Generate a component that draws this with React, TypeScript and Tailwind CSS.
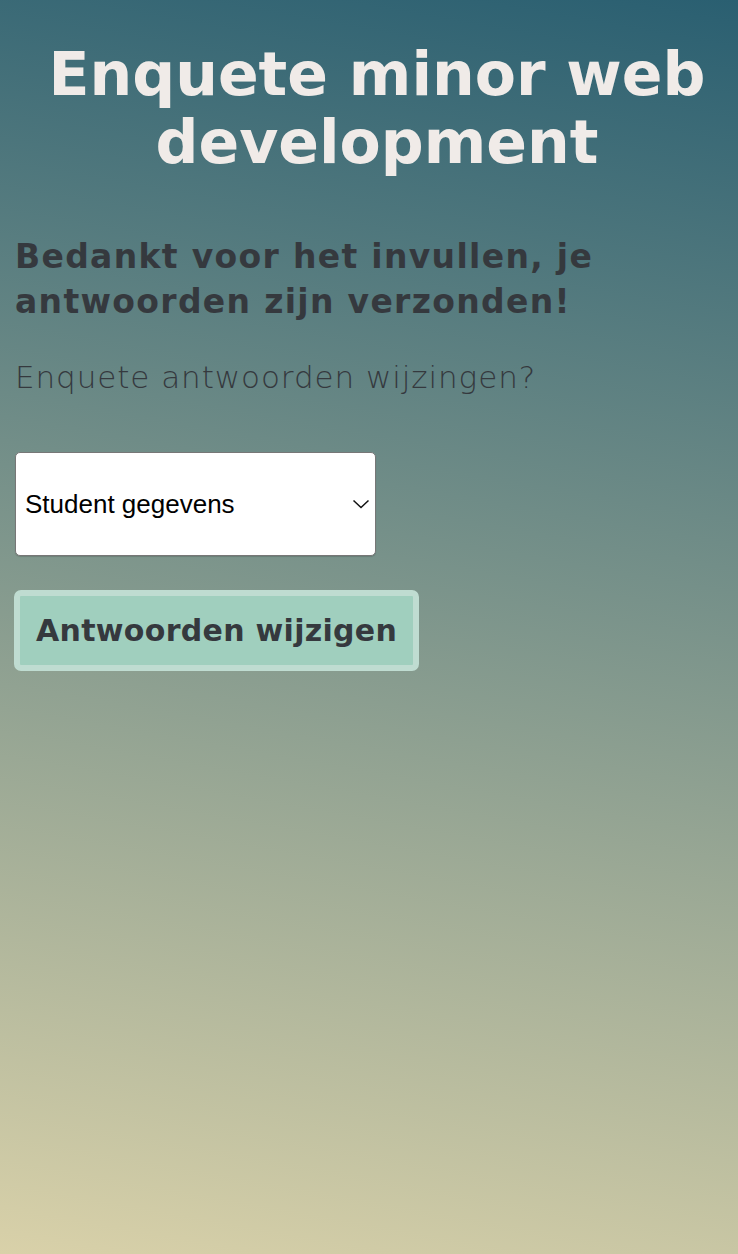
import React from 'react';

const Chevron: React.FC = () => (
  <svg width="18" height="10" viewBox="0 0 18 10" fill="none" className="pointer-events-none absolute right-[6px] top-[47px]">
    <path d="M1.5 1.5L9 8.5L16.5 1.5" stroke="#111" strokeWidth="1.5" />
  </svg>
);

const App: React.FC = () => (
  <div
    className="min-h-[1254px] w-full bg-[linear-gradient(190deg,#2a5f71_0%,#d9d1a9_100%)] px-[15px] pt-[40px]"
    style={{ fontFamily: '"DejaVu Sans", Inter, sans-serif' }}
  >
    <h1 className="ml-[16px] text-center text-[60px] font-bold leading-[68px] text-[#f0ebe8]">
      Enquete minor web development
    </h1>
    <h2 className="mt-[58px] text-[33px] font-bold leading-[45px] tracking-[0.04em] text-[#35393e]">
      Bedankt voor het invullen, je antwoorden zijn verzonden!
    </h2>
    <p className="mt-[33px] text-[31px] font-light leading-[40px] tracking-[0.03em] text-[#35393e]">
      Enquete antwoorden wijzingen?
    </p>
    <div className="relative mt-[55px] w-[361px]">
      <select
        className="h-[104px] w-full appearance-none rounded-[5px] border border-[#777] bg-white pl-[9px] text-[26px] text-black shadow-[0_1px_1px_rgba(0,0,0,0.15)]"
        style={{ fontFamily: '"Liberation Sans", Arial, sans-serif' }}
        defaultValue="student"
      >
        <option value="student">Student gegevens</option>
        <option value="vakken">Vakken</option>
      </select>
      <Chevron />
    </div>
    <button className="mt-[34px] -ml-px rounded-[7px] border-[6px] border-[#bfdcd1] bg-[#a0cfbe] px-[16px] pt-[17px] pb-[16px] text-[30px] font-bold leading-[36px] tracking-[0.01em] text-[#35393e]">
      Antwoorden wijzigen
    </button>
  </div>
);

export default App;
